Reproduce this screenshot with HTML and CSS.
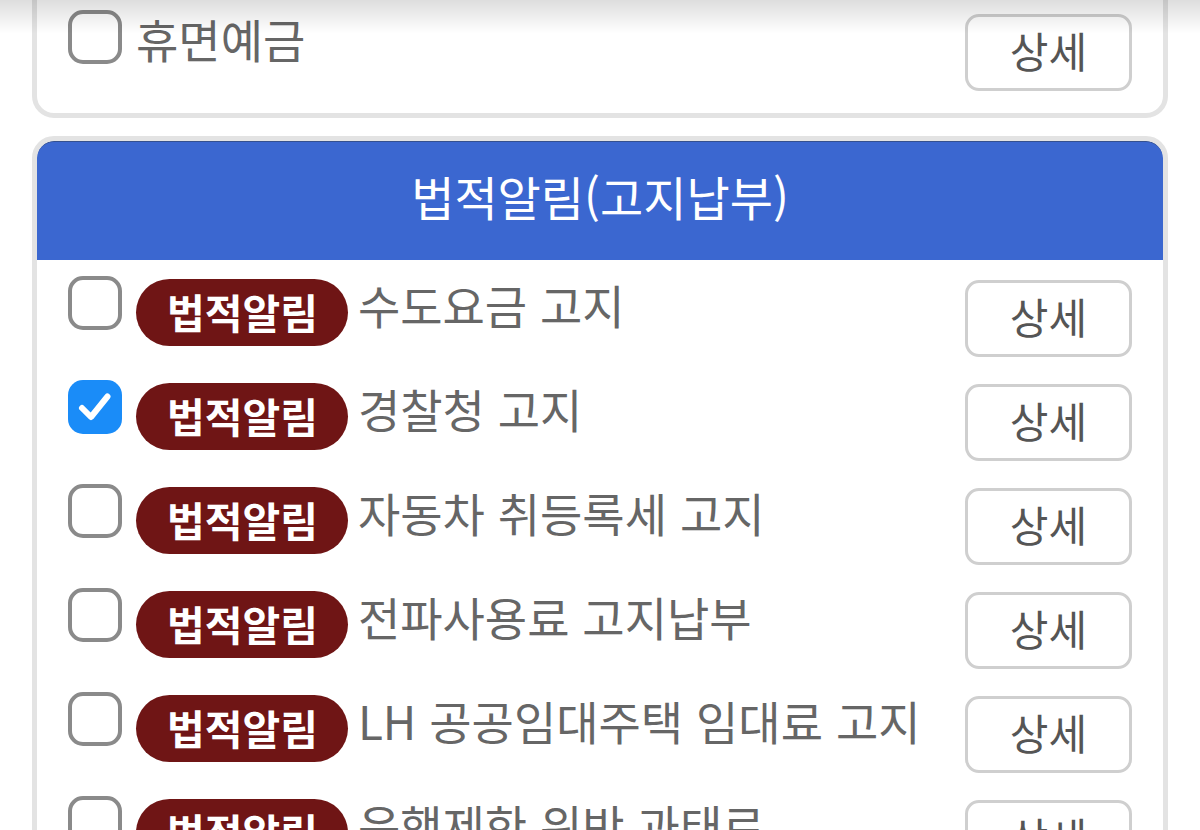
FILE: index.html
```html
<!DOCTYPE html>
<html lang="ko">
<head>
<meta charset="utf-8">
<title>법적알림</title>
<link rel="stylesheet" href="styles.css">
</head>
<body>
<div class="top-shade"></div>
<main class="page">
  <section class="card card-top">
    <div class="row">
      <span class="check"></span>
      <span class="label">휴면예금</span>
      <button class="detail">상세</button>
    </div>
  </section>

  <section class="card card-group">
    <header class="group-head">법적알림(고지납부)</header>
    <div class="list">
      <div class="row">
        <span class="check"></span>
        <span class="badge">법적알림</span>
        <span class="label">수도요금 고지</span>
        <button class="detail">상세</button>
      </div>
      <div class="row">
        <span class="check checked"><svg viewBox="0 0 54 54" width="54" height="54"><path d="M14 28 L23 37 L39.5 16.5" fill="none" stroke="#fff" stroke-width="6" stroke-linecap="round" stroke-linejoin="round"/></svg></span>
        <span class="badge">법적알림</span>
        <span class="label">경찰청 고지</span>
        <button class="detail">상세</button>
      </div>
      <div class="row">
        <span class="check"></span>
        <span class="badge">법적알림</span>
        <span class="label">자동차 취등록세 고지</span>
        <button class="detail">상세</button>
      </div>
      <div class="row">
        <span class="check"></span>
        <span class="badge">법적알림</span>
        <span class="label">전파사용료 고지납부</span>
        <button class="detail">상세</button>
      </div>
      <div class="row">
        <span class="check"></span>
        <span class="badge">법적알림</span>
        <span class="label">LH 공공임대주택 임대료 고지</span>
        <button class="detail">상세</button>
      </div>
      <div class="row">
        <span class="check"></span>
        <span class="badge">법적알림</span>
        <span class="label">운행제한 위반 과태료</span>
        <button class="detail">상세</button>
      </div>
    </div>
  </section>
</main>
</body>
</html>
```

FILE: styles.css
```css
* { box-sizing: border-box; }

html, body {
  margin: 0;
  padding: 0;
  height: 830px;
  overflow: hidden;
  background: #ffffff;
  font-family: "Noto Sans CJK KR", "Noto Sans", sans-serif;
}

.top-shade {
  position: fixed;
  top: 0;
  left: 0;
  right: 0;
  height: 34px;
  background: linear-gradient(rgba(0, 0, 0, 0.13), rgba(0, 0, 0, 0));
  pointer-events: none;
  z-index: 5;
}

.page {
  padding: 0 32px;
}

.card {
  border: 5px solid #e3e3e3;
  border-radius: 22px;
  background: #fff;
}

.card-top {
  margin-top: -40px;
  padding: 45px 31px 22px;
}

.card-group {
  margin-top: 18px;
  overflow: hidden;
}

.group-head {
  height: 119px;
  padding-bottom: 12px;
  background: #3b67d0;
  border-top: 1px solid #34508f;
  border-radius: 17px 17px 0 0;
  color: #fff;
  font-size: 47px;
  display: flex;
  align-items: center;
  justify-content: center;
}

.list {
  padding: 16px 31px 0;
}

.list .row {
  height: 104px;
}

.row {
  display: flex;
  align-items: flex-start;
}

.check {
  flex: none;
  width: 54px;
  height: 54px;
  border: 4px solid #8a8a8a;
  border-radius: 15px;
  margin-right: 14px;
  background: #fff;
}

.check.checked {
  border: none;
  background: #1a8cf8;
}

.check svg { display: block; }

.badge {
  flex: none;
  margin-top: 3px;
  height: 67px;
  padding: 0 30px 4px 31px;
  border-radius: 34px;
  background: #6f1515;
  color: #fff;
  font-size: 41px;
  font-weight: 700;
  display: flex;
  align-items: center;
  margin-right: 10px;
}

.label {
  flex: 1;
  font-size: 46px;
  line-height: 56px;
  color: #666;
  white-space: nowrap;
}

.detail {
  flex: none;
  margin-top: 4px;
  width: 167px;
  height: 77px;
  border: 3px solid #cfcfcf;
  border-radius: 14px;
  background: #fff;
  color: #555;
  font-family: "Noto Sans CJK KR", "Noto Sans", sans-serif;
  font-size: 42px;
  padding: 0 0 6px;
}
```
